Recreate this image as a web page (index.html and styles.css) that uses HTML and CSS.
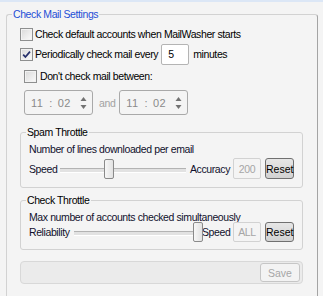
FILE: index.html
```html
<!DOCTYPE html>
<html lang="en">
<head>
  <meta charset="UTF-8">
  <title>Check Mail Settings</title>
  <link rel="stylesheet" href="styles.css">
</head>
<body>

  <fieldset class="group main">
    <legend>Check Mail Settings</legend>

    <div class="row">
      <span class="box"></span>
      <span>Check default accounts when MailWasher starts</span>
    </div>

    <div class="row row-every">
      <span class="box">
        <svg width="11" height="11" viewBox="0 0 11 11"><path d="M2.2 5.6 L4.4 8 L9 2.6" fill="none" stroke="#26306b" stroke-width="1.7"/></svg>
      </span>
      <span>Periodically check mail every</span>
      <input class="num" type="text" value="5">
      <span class="after">minutes</span>
    </div>

    <div class="row row-between">
      <span class="box"></span>
      <span>Don't check mail between:</span>
    </div>

    <!-- time range, disabled -->
    <div class="times">
      <div class="spin">
        <span>11</span><span class="colon">:</span><span>02</span>
        <svg class="arrows" width="7" height="14" viewBox="0 0 7 14"><path d="M3.5 1 L6.5 5 L0.5 5 Z M0.5 9 L6.5 9 L3.5 13 Z" fill="#727272"/></svg>
      </div>
      <span class="and">and</span>
      <div class="spin">
        <span>11</span><span class="colon">:</span><span>02</span>
        <svg class="arrows" width="7" height="14" viewBox="0 0 7 14"><path d="M3.5 1 L6.5 5 L0.5 5 Z M0.5 9 L6.5 9 L3.5 13 Z" fill="#727272"/></svg>
      </div>
    </div>

    <fieldset class="group sub spam">
      <legend>Spam Throttle</legend>
      <div class="line">Number of lines downloaded per email</div>
      <div class="slide-row">
        <span class="lbl-speed">Speed</span>
        <div class="slider"><span class="thumb" style="left: 46px"></span></div>
        <span class="lbl-right">Accuracy</span>
        <span class="val">200</span>
        <button class="reset">Reset</button>
      </div>
    </fieldset>

    <fieldset class="group sub check">
      <legend>Check Throttle</legend>
      <div class="line">Max number of accounts checked simultaneously</div>
      <div class="slide-row">
        <span class="lbl-rel">Reliability</span>
        <div class="slider"><span class="thumb" style="left: 121px"></span></div>
        <span class="lbl-right tight">Speed</span>
        <span class="val">ALL</span>
        <button class="reset">Reset</button>
      </div>
    </fieldset>

    <div class="savebar">
      <button class="save" disabled>Save</button>
    </div>
  </fieldset>

</body>
</html>
```

FILE: styles.css
```css
* {
  box-sizing: border-box;
}
html, body {
  margin: 0;
  height: 100%;
  overflow: hidden;
}
body {
  background-color: #f4f4f4;
  font-family: "Liberation Sans", Arial, sans-serif;
  font-size: 10.5px;
  letter-spacing: -0.4px;
  color: #000;
  border-top: 2px solid #dce7f6;
  padding: 6px 0 0 6px;
}

.group {
  margin: 0;
  min-width: 0;
  border: 1px solid #d2d2d2;
  border-radius: 3px;
}
.group legend {
  padding: 0 1px;
  line-height: 13px;
}

.main {
  width: 312px;
  border-right-color: #a4a4a4;
  padding: 5px 14px 40px 13px;
}
.main > legend {
  color: #1f4fd6;
  margin-left: -8px;
}

.row {
  display: flex;
  align-items: center;
  height: 16px;
}
.row-every {
  height: 22px;
  margin-top: 1px;
}
.row-between {
  margin-top: 3px;
  padding-left: 4px;
}
.box {
  width: 13px;
  height: 13px;
  margin-right: 2px;
  border: 1px solid #8e8f8f;
  background: linear-gradient(135deg, #d9d9d9, #fbfbfb);
  box-shadow: inset 0 0 0 1px #f2f2f2;
  display: flex;
  align-items: center;
  justify-content: center;
}
.row-between .box {
  margin-right: 3px;
}
.num {
  width: 28px;
  height: 21px;
  margin: 0 0 0 3px;
  padding: 0 0 0 6px;
  border: 1px solid #b4b4b4;
  border-radius: 2px;
  background: #fff;
  font: inherit;
  color: #000;
}
.after {
  margin-left: 4px;
}

.times {
  display: flex;
  align-items: center;
  margin-top: 6px;
  padding-left: 4px;
}
.spin {
  width: 69px;
  height: 25px;
  border: 1px solid #a9a9a9;
  border-radius: 3px;
  padding-left: 6px;
  display: flex;
  align-items: center;
  color: #8a8a8a;
  font-size: 11px;
  letter-spacing: 0.4px;
}
.colon {
  margin: 0 5px 0 6px;
}
.arrows {
  margin-left: auto;
  margin-right: 5px;
}
.and {
  color: #a2a2a2;
  margin: 0 4px 0 6px;
}

.sub {
  width: 283px;
  padding: 2px 8px 7px 8px;
}
.sub legend {
  margin-left: -3px;
}
.spam {
  margin-top: 11px;
}
.check {
  margin-top: 6px;
}
.line {
  color: #10102c;
  height: 16px;
  line-height: 16px;
}
.check .line {
  height: 12px;
  line-height: 12px;
  margin-top: 2px;
}
.slide-row {
  display: flex;
  align-items: center;
  height: 21px;
  margin-top: 1px;
  color: #10102c;
}
.spam .slide-row {
  margin-bottom: 1px;
}
.check .slide-row {
  height: 20px;
  margin-top: -1px;
}
.lbl-speed {
  width: 29px;
}
.lbl-rel {
  width: 43px;
}
.lbl-right {
  flex: 1;
  padding-left: 2px;
}
.lbl-right.tight {
  padding-left: 0;
}

.slider {
  position: relative;
  width: 130px;
  height: 20px;
}
.slider::before {
  content: "";
  position: absolute;
  left: 2px;
  right: 2px;
  top: 9px;
  height: 3px;
  border-top: 1px solid #b3b3b3;
  border-bottom: 1px solid #fff;
  background: #e2e2e2;
}
.thumb {
  position: absolute;
  top: 0;
  width: 10px;
  height: 20px;
  border: 1px solid #8a8a8a;
  border-radius: 2px;
  background: linear-gradient(to right, #f7f7f7, #e2e2e2);
}

.val {
  width: 28px;
  height: 100%;
  margin-right: 4px;
  border: 1px solid #d2d2d2;
  border-radius: 2px;
  color: #a6a6a6;
  display: flex;
  align-items: center;
  justify-content: center;
}
.reset {
  width: 29px;
  height: 100%;
  padding: 0;
  border: 1px solid #707070;
  border-radius: 3px;
  background: linear-gradient(#e6e6e6, #d2d2d2);
  font: inherit;
  color: #000;
}

.savebar {
  margin-top: 11px;
  width: 283px;
  height: 23px;
  border: 1px solid #d8d8d8;
  border-radius: 4px;
  background: #ebebeb;
  display: flex;
  align-items: center;
  justify-content: flex-end;
  padding-right: 2px;
}
.save {
  width: 40px;
  height: 19px;
  padding: 0;
  border: 1px solid #c6c6c6;
  border-radius: 3px;
  background: #f3f3f3;
  font: inherit;
  color: #a6a6a6;
}
```
